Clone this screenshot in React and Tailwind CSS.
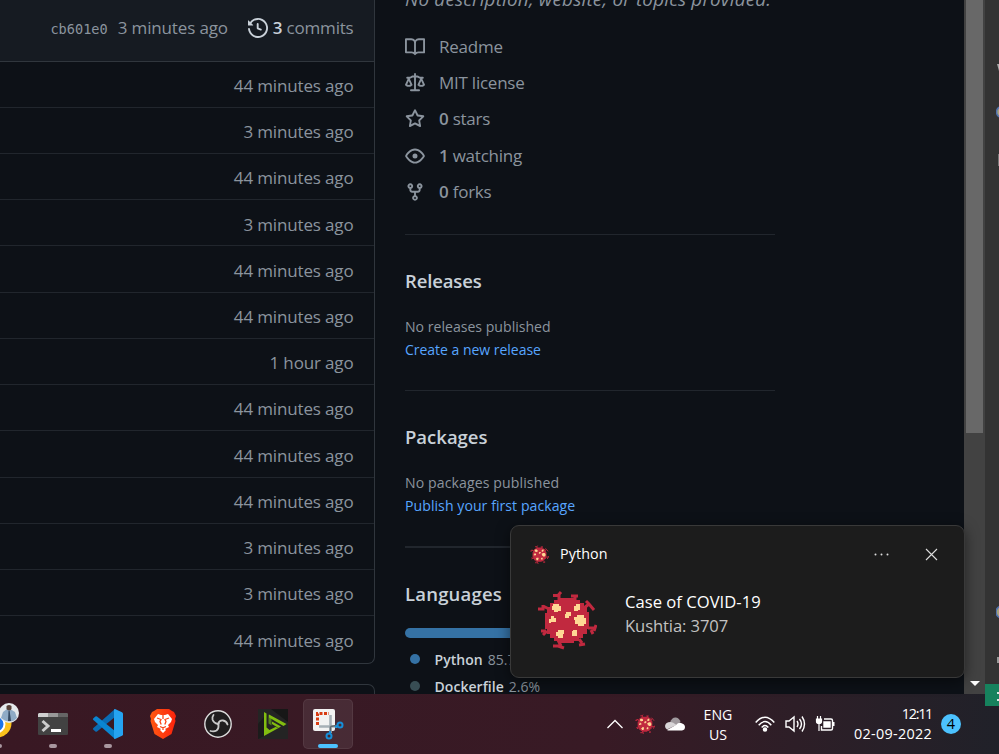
import React from "react";

const octicons = {
  history: "M1.643 3.143L.427 1.927A.25.25 0 000 2.104V5.75c0 .138.112.25.25.25h3.646a.25.25 0 00.177-.427L2.715 4.215a6.5 6.5 0 11-1.18 4.458.75.75 0 10-1.493.154 8.001 8.001 0 101.6-5.684zM7.75 4a.75.75 0 01.75.75v2.992l2.028.812a.75.75 0 01-.557 1.392l-2.5-1A.75.75 0 017 8.25v-3.5A.75.75 0 017.75 4z",
  book: "M0 1.75A.75.75 0 01.75 1h4.253c1.227 0 2.317.59 3 1.501A3.744 3.744 0 0111.006 1h4.245a.75.75 0 01.75.75v10.5a.75.75 0 01-.75.75h-4.507a2.25 2.25 0 00-1.591.659l-.622.621a.75.75 0 01-1.06 0l-.622-.621A2.25 2.25 0 005.258 13H.75a.75.75 0 01-.75-.75V1.75zm8.755 3a2.25 2.25 0 012.25-2.25H14.5v9h-3.757c-.71 0-1.4.201-1.992.572l.004-7.322zm-1.504 7.324l.004-5.073-.002-2.253A2.25 2.25 0 005.003 2.5H1.5v9h3.757a3.75 3.75 0 011.994.574z",
  law: "M8.75.75a.75.75 0 00-1.5 0V2h-.984c-.305 0-.604.08-.869.23l-1.288.737A.25.25 0 013.984 3H1.75a.75.75 0 000 1.5h.428L.066 9.192a.75.75 0 00.154.838l.07.065a3.514 3.514 0 00.686.45A4.492 4.492 0 003 11c.88 0 1.556-.22 2.023-.454a3.515 3.515 0 00.686-.45l.071-.066a.75.75 0 00.154-.838L3.822 4.5h.162c.305 0 .604-.08.869-.23l1.289-.737a.25.25 0 01.124-.033h.984V13h-2.5a.75.75 0 000 1.5h6.5a.75.75 0 000-1.5h-2.5V3.5h.984a.25.25 0 01.124.033l1.29.736c.264.152.563.231.868.231h.162l-2.112 4.692a.75.75 0 00.154.838l.07.065a3.517 3.517 0 00.686.45A4.492 4.492 0 0013 11c.88 0 1.556-.22 2.023-.454a3.512 3.512 0 00.686-.45l.071-.066a.75.75 0 00.154-.838L13.823 4.5h.427a.75.75 0 000-1.5h-2.234a.25.25 0 01-.124-.033l-1.29-.736A1.75 1.75 0 009.735 2H8.75V.75zM1.695 9.227c.285.135.718.273 1.305.273s1.02-.138 1.305-.273L3 6.327l-1.305 2.9zm10 0c.285.135.718.273 1.305.273s1.02-.138 1.305-.273L13 6.327l-1.305 2.9z",
  star: "M8 .25a.75.75 0 01.673.418l1.882 3.815 4.21.612a.75.75 0 01.416 1.279l-3.046 2.97.719 4.192a.75.75 0 01-1.088.791L8 12.347l-3.766 1.98a.75.75 0 01-1.088-.79l.72-4.194L.818 6.374a.75.75 0 01.416-1.28l4.21-.611L7.327.668A.75.75 0 018 .25zm0 2.445L6.615 5.5a.75.75 0 01-.564.41l-3.097.45 2.24 2.184a.75.75 0 01.216.664l-.528 3.084 2.769-1.456a.75.75 0 01.698 0l2.77 1.456-.53-3.084a.75.75 0 01.216-.664l2.24-2.183-3.096-.45a.75.75 0 01-.564-.41L8 2.694v.001z",
  eye: "M1.679 7.932c.412-.621 1.242-1.75 2.366-2.717C5.175 4.242 6.527 3.5 8 3.5c1.473 0 2.824.742 3.955 1.715 1.124.967 1.954 2.096 2.366 2.717a.119.119 0 010 .136c-.412.621-1.242 1.75-2.366 2.717C10.825 11.758 9.473 12.5 8 12.5c-1.473 0-2.824-.742-3.955-1.715C2.92 9.818 2.09 8.69 1.679 8.068a.119.119 0 010-.136zM8 2c-1.981 0-3.67.992-4.933 2.078C1.797 5.169.88 6.423.43 7.1a1.619 1.619 0 000 1.798c.45.678 1.367 1.932 2.637 3.024C4.329 13.008 6.019 14 8 14c1.981 0 3.67-.992 4.933-2.078 1.27-1.091 2.187-2.345 2.637-3.023a1.619 1.619 0 000-1.798c-.45-.678-1.367-1.932-2.637-3.023C11.671 2.992 9.981 2 8 2zm0 8a2 2 0 100-4 2 2 0 000 4z",
  fork: "M5 3.25a.75.75 0 11-1.5 0 .75.75 0 011.5 0zm0 2.122a2.25 2.25 0 10-1.5 0v.878A2.25 2.25 0 005.75 8.5h1.5v2.128a2.251 2.251 0 101.5 0V8.5h1.5a2.25 2.25 0 002.25-2.25v-.878a2.25 2.25 0 10-1.5 0v.878a.75.75 0 01-.75.75h-4.5A.75.75 0 015 6.25v-.878zm3.75 7.378a.75.75 0 11-1.5 0 .75.75 0 011.5 0zm3-8.75a.75.75 0 100-1.5.75.75 0 000 1.5z",
};

const times = [
  "44 minutes ago", "3 minutes ago", "44 minutes ago", "3 minutes ago", "44 minutes ago",
  "44 minutes ago", "1 hour ago", "44 minutes ago", "44 minutes ago", "44 minutes ago",
  "3 minutes ago", "3 minutes ago", "44 minutes ago",
];

function Octicon({ name, className }) {
  return (
    <svg className={className} viewBox="0 0 16 16" fill="currentColor">
      <path fillRule="evenodd" d={octicons[name]} />
    </svg>
  );
}

function Virus({ className }) {
  return (
    <svg className={className} viewBox="0 0 60 60">
      <g stroke="#c1293f" strokeWidth="3" fill="none">
        <path d="M22 11V4M16 5.500h5l3-3.500M38 10V6M34 6h7M47 18l5-4M49 11l3 3 5 6M12 19l-6-3M1 19h5v-4M9 41H4M10 41l-4 4M21 50l3 6M16 56h5l6 2M42 49l3 4M42 55l6-1M51 38h6M59 35l-2 6M54 40l2 4" />
      </g>
      <path fill="#c1293f" d="M22 8h16v2h5v3h4v4h3v5h2v17h-2v5h-4v4h-4v3h-5v2H22v-2h-5v-3h-4v-4h-3v-5H8V23h2v-6h3v-4h4v-3h5z" />
      <path fill="#ffd894" d="M16 14h6v2h2v5h-3v1h-4v-2h-2v-4h1zM39 14h4v6h-2v1h-4v-5h2zM29 22h5v4h-2v2h-4v-4h1zM14 26h3v2h2v4h-5v1h-2v-4h2zM40 25h7v3h2v6h-2v2h-6v-2h-3v-4h-1v-3h3zM21 40h6v4h-1v4h-5v-2h-2v-4h2zM36 40h4v6h-5v-5h1z" />
    </svg>
  );
}

function Info({ icon, num, children }) {
  return (
    <div className="flex h-[36.2px] items-center text-[#8b949e]">
      <Octicon name={icon} className="h-5 w-5 shrink-0" />
      <span className="ml-[14px] whitespace-pre text-[17px] leading-6 tracking-[-0.24px]">
        {num && <b className="font-semibold">{num} </b>}
        {children}
      </span>
    </div>
  );
}

function FileTable() {
  return (
    <div className="flex h-full w-[375px] shrink-0 flex-col">
      <div className="h-[664px] shrink-0 overflow-hidden rounded-br-[7px] border-r border-b border-[#30363d]">
        <div className="flex h-[61.6px] items-center justify-end border-b border-[#30363d] bg-[#161b22] pr-[20.5px] pb-[5px] text-[17px] text-[#8b949e]">
          <span className="mt-[3px] font-['DejaVu_Sans_Mono'] text-[13.6px]">cb601e0</span>
          <span className="ml-[10px] tracking-[-0.15px]">3 minutes ago</span>
          <Octicon name="history" className="ml-5 h-5 w-5 text-[#c9d1d9]" />
          <span className="ml-[5px] tracking-[-0.2px]"><b className="font-semibold text-[#c9d1d9]">3</b> commits</span>
        </div>
        {times.map((t, i) => (
          <div key={i} className="flex h-[46.23px] items-center justify-end border-b border-[#21262d] pt-[3px] pr-[20.5px] text-[17px] tracking-[-0.15px] text-[#8b949e] last:border-transparent">{t}</div>
        ))}
      </div>
      <div className="mt-5 h-5 rounded-tr-[7px] border-t border-r border-[#30363d]" />
    </div>
  );
}

function Sidebar() {
  return (
    <div className="ml-[30px] flex w-[370px] shrink-0 flex-col">
      <div className="-mt-[13px] h-6 shrink-0 text-[18.8px] leading-6 tracking-[0.22px] whitespace-nowrap text-[#8b949e] italic">No description, website, or topics provided.</div>
      <div className="mt-[18px] flex shrink-0 flex-col">
        <Info icon="book">Readme</Info>
        <Info icon="law">MIT license</Info>
        <Info icon="star" num="0">stars</Info>
        <Info icon="eye" num="1">watching</Info>
        <Info icon="fork" num="0">forks</Info>
      </div>
      <section className="mt-[24px] h-[156px] shrink-0 border-t border-[#21262d] pt-[33px]">
        <h2 className="text-[18.5px] leading-[25px] font-semibold tracking-[-0.15px] text-[#c9d1d9]">Releases</h2>
        <p className="mt-[22px] text-[14.1px] leading-[23px] text-[#8b949e]">No releases published</p>
        <p className="text-[14px] leading-[23px] tracking-[-0.02px] text-[#58a6ff]">Create a new release</p>
      </section>
      <section className="h-[156px] shrink-0 border-t border-[#21262d] pt-[33px]">
        <h2 className="text-[18.5px] leading-[25px] font-semibold text-[#c9d1d9]">Packages</h2>
        <p className="mt-[22px] text-[14.1px] leading-[23px] tracking-[0.1px] text-[#8b949e]">No packages published</p>
        <p className="text-[14.1px] leading-[23px] tracking-[0.05px] text-[#58a6ff]">Publish your first package</p>
      </section>
      <section className="shrink-0 border-t-2 border-[#21262d] pt-[33px]">
        <h2 className="text-[18.5px] leading-[25px] font-semibold tracking-[0.2px] text-[#c9d1d9]">Languages</h2>
        <div className="mt-[22px] h-[10px] rounded-full bg-[#3572a5]" />
        <div className="mt-[8px] flex h-[27px] items-center text-[14px] text-[#8b949e]">
          <i className="mr-[14.5px] ml-[5px] h-[10px] w-[10px] rounded-full bg-[#3572a5]" />
          <b className="mr-[5px] font-semibold tracking-[0.05px] text-[#c9d1d9]">Python</b> 85.7%
        </div>
        <div className="flex h-[27px] items-center text-[14px] text-[#8b949e]">
          <i className="mr-[14.5px] ml-[5px] h-[10px] w-[10px] rounded-full bg-[#384d54]" />
          <b className="mr-[5px] font-semibold tracking-[0.05px] text-[#c9d1d9]">Dockerfile</b> 2.6%
        </div>
      </section>
    </div>
  );
}

function Toast() {
  return (
    <div className="absolute top-[525px] left-[510px] h-[153px] w-[455px] rounded-[9px] border border-[#393939] bg-[#1c1c1c] shadow-[0_3px_14px_rgba(0,0,0,.5)]">
      <div className="flex h-[56px] items-center pl-[19px]">
        <Virus className="h-[19px] w-[19px]" />
        <span className="ml-[11px] text-[14.3px] leading-5 tracking-[0.12px] text-white">Python</span>
        <svg className="ml-auto h-4 w-4" viewBox="0 0 16 16" fill="#ddd"><circle cx="2.5" cy="8.500" r="1" /><circle cx="8.500" cy="8.500" r="1" /><circle cx="14.500" cy="8.500" r="1" /></svg>
        <svg className="mr-[26px] ml-[36px] h-[13px] w-[13px]" viewBox="0 0 13 13" stroke="#ddd" strokeWidth="1.1"><path d="M1 1l11 11M12 1 1 12" /></svg>
      </div>
      <div className="flex pl-[26px]">
        <Virus className="mt-[8px] h-[60px] w-[60px]" />
        <div className="ml-[28px] pt-[8px] text-[16.6px] leading-6">
          <p className="tracking-[0.02px] text-white">Case of COVID-19</p>
          <p className="tracking-[-0.1px] text-[#c2c2c2]">Kushtia: 3707</p>
        </div>
      </div>
    </div>
  );
}

function Chrome() {
  return (
    <svg className="h-[60px] w-[20px]" viewBox="0 0 20 60">
      <circle cx="-3" cy="29" r="14.500" fill="#fbc11c" />
      <circle cx="-4" cy="30" r="9.500" fill="#fff" />
      <circle cx="-4" cy="30" r="7.500" fill="#1a73e8" />
      <circle cx="9" cy="19" r="10" fill="#e5e9ec" />
      <path d="M1 24l2-6 4-3 3 0 5 3 2 6q-7 7-16 0z" fill="#8fabc6" />
      <path d="M8.500 17h1.200l1.300 10H8z" fill="#344a63" />
      <path d="M6.500 12q2.500-2 5 0v3q-2 3-5 0z" fill="#574138" />
    </svg>
  );
}

function Terminal() {
  return (
    <svg className="h-[22px] w-[30px]" viewBox="0 0 30 22">
      <rect width="30" height="22" rx="1.2" fill="#424242" />
      <path d="M1 0h9v4H0V1z" fill="#d0d0d0" /><path d="M10 0h10v4H10z" fill="#999" /><path d="M20 0h9l1 1v3H20z" fill="#666" />
      <path d="M4.500 8l5.500 5-5.500 5" fill="none" stroke="#ccc" strokeWidth="3" /><path d="M13 16h10v3H13z" fill="#fff" />
    </svg>
  );
}

function VSCode() {
  return (
    <svg className="h-[30px] w-[30px]" viewBox="0 0 30 30">
      <path d="M22 0v8L4 22.5q-.8.6-1.6 0L.4 20.7q-.8-.8 0-1.7z" fill="#0a6cb4" />
      <path d="M22 30v-8L4 7.5q-.8-.6-1.6 0L.4 9.300q-.8.8 0 1.700z" fill="#0a85d1" />
      <path d="M22 0l7 3.200q1 .5 1 1.500v20.600q0 1-1 1.500L22 30q-1 0-1-1V1q0-1 1-1z" fill="#25a4f2" />
    </svg>
  );
}

function Brave() {
  return (
    <svg className="h-[30px] w-[26px]" viewBox="0 0 26 30">
      <defs><linearGradient id="brave"><stop stopColor="#ff5a13" /><stop offset="1" stopColor="#fb220c" /></linearGradient></defs>
      <path d="M7 0h12l3 2 2 1 2 4-1 3 .5 2-4 13-8.500 5-8.500-5L.5 12l.5-2-1-3 2-4 2-1z" fill="url(#brave)" />
      <path d="M8 5l3 1h4l3-1 4 5-1 3-3 3 1 2-4 2 1 1-3 3-3-3 1-1-4-2 1-2-3-3-1-3z" fill="#fff" />
      <path d="M7 9l4 1.500-1 2 1.200 3M19 9l-4 1.500 1 2-1.200 3M13 6v4M10 17.500l3 1.300 3-1.300M13 18.500V21" fill="none" stroke="#fb4518" strokeWidth="1.300" />
    </svg>
  );
}

function OBS() {
  return (
    <svg className="h-[28px] w-[28px]" viewBox="0 0 28 28">
      <circle cx="14" cy="14" r="13.200" fill="#1f1d1e" stroke="#dcdcdc" strokeWidth="1.400" />
      <g fill="none" stroke="#c9c9c9" strokeWidth="1.800" strokeLinecap="round">
        <path d="M14 14Q9.500 13 8.500 9.500 8 7 9.500 5" />
        <path d="M14 14Q15.500 10 19 10.500q3.500.5 4.500 4" />
        <path d="M14 14q1.500 4-1.500 6.500Q10 22 6.500 21" />
      </g>
      <path d="M12.500 13h3.200l-.7 3.500z" fill="#c9c9c9" />
    </svg>
  );
}

function Player() {
  return (
    <svg className="h-[30px] w-[30px]" viewBox="0 0 30 30">
      <path fill="#242424" d="M0 0h30v30H0z" /><path d="M13 0h17v13z" fill="#171717" /><path d="M0 15L6 8v19L0 30z" fill="#1b1b1b" />
      <path d="M6 3l2.500 1.500v14l3 2.500 6-3 3 1L6 27z" fill="#82bd10" />
      <path d="M10.500 5.500l3 2v9l-3-2z" fill="#55821b" />
      <path d="M11 5.500L28.500 15l-3 2L11 8.500zM14 12.500l9 5-2.500 1.500-6.500-4z" fill="#82bd10" />
    </svg>
  );
}

function Snip() {
  return (
    <svg className="h-[31px] w-[31px]" viewBox="0 0 31 31">
      <rect width="22" height="22" rx="2" fill="#f2f2f2" />
      <path d="M4.5 16V4.500H16" fill="none" stroke="#d83b12" strokeWidth="3" strokeDasharray="3 1.500" />
      <path d="M17.500 6v18M6 17.500h18" stroke="#a6b0b6" strokeWidth="2.600" />
      <path d="M17.500 17.500l6-1M17.500 17.500v5" stroke="#5d6970" strokeWidth="1.600" />
      <g fill="none" stroke="#168fd9" strokeWidth="2"><circle cx="27" cy="16" r="2.500" /><circle cx="16" cy="27" r="2.500" /><path d="M22 18l3-1M17 24v-2" /></g>
    </svg>
  );
}

function Task({ children, dot, active }) {
  return (
    <div className={"relative flex h-[50px] w-[50px] shrink-0 items-center justify-center rounded-[5px] " + (active ? "border border-white/7 bg-white/8" : "")}>
      {children}
      {dot && <i className="absolute bottom-[1px] left-[21px] h-1 w-2 rounded-full bg-[#a9979f]" />}
      {active && <i className="absolute bottom-0 left-[14px] h-1 w-5 rounded-full bg-[#4cc2ff]" />}
    </div>
  );
}

function Taskbar() {
  return (
    <div className="flex h-[60px] w-full items-center overflow-hidden bg-linear-to-r from-[#391823] via-[#381a25] via-60% to-[#202129] text-white">
      <div className="relative flex h-[60px] w-[28px] shrink-0">
        <Chrome />
        <i className="absolute top-[50px] -left-[6px] h-1 w-2 rounded-full bg-[#a9979f]" />
      </div>
      <div className="flex gap-[5px]">
        <Task dot><Terminal /></Task>
        <Task dot><VSCode /></Task>
        <Task><Brave /></Task>
        <Task><OBS /></Task>
        <Task><Player /></Task>
        <Task active><Snip /></Task>
      </div>
      <svg className="ml-[254px] h-[10px] w-4 shrink-0" viewBox="0 0 16 10" fill="none" stroke="white" strokeWidth="1.300"><path d="M.5 9L8 1.500 15.500 9" /></svg>
      <Virus className="mb-px ml-[12px] h-[20px] w-[20px] shrink-0" />
      <svg className="ml-[10px] h-[14px] w-[20px] shrink-0" viewBox="0 0 20 14">
        <path d="M5 5.500Q7 0 11 .5q3.500.5 4.500 4.500L10 9z" fill="#a09a9e" />
        <path d="M2 12.500Q0 11 0 9q.5-4 5.500-4 2.500 0 6 3z" fill="#d8d5d7" />
        <path d="M2 13l9-5q2.500-3 5-2 4 1 4 4 0 3-3 3.500H4q-1 0-2-.5z" fill="#fff" />
      </svg>
      <div className="ml-[18px] w-[30px] shrink-0 pt-px text-center text-[14.2px] leading-5"><div>ENG</div><div>US</div></div>
      <svg className="ml-[22px] h-[16px] w-[20px] shrink-0" viewBox="0 0 20 16" fill="none" stroke="white" strokeWidth="1.500"><path d="M.7 6.500Q10-4 19.300 6.500M3.700 9.200Q10 2 16.300 9.200M6.700 11.500Q10 7.500 13.300 11.500" /><circle cx="10" cy="13.500" r="1.500" fill="white" /></svg>
      <svg className="ml-[10px] h-[18px] w-[21px] shrink-0" viewBox="0 0 21 18" fill="none" stroke="white" strokeWidth="1.400"><path d="M1 6h3l5-4v14l-5-4H1zM12 6q2 3 0 6M14.500 4q4 5 0 10M17 1.500q5 7.500 0 15" /></svg>
      <svg className="ml-[9px] h-[18px] w-[20px] shrink-0" viewBox="0 0 20 18" fill="none" stroke="white" strokeWidth="1.400"><path d="M9 4h7q1.500 0 1.500 1.500v8q0 1.500-1.500 1.500H6.500v-4" /><path d="M9 7h6v5H9z" fill="white" /><path d="M18 7h1.500v4H18z" fill="white" stroke="none" /><path d="M1.500 4h5v2.500q0 2-2.500 2t-2.500-2zM2.500 1v3M5.500 1v3M4 9v7" fill="white" strokeWidth="1.200" /></svg>
      <div className="ml-[17px] w-[80px] shrink-0 text-right text-[14.4px] leading-5 whitespace-nowrap">
        <div className="tracking-[-1.300px]">12:11</div>
        <div className="tracking-[0.3px]">02-09-2022</div>
      </div>
      <div className="ml-[9px] flex h-5 w-5 shrink-0 items-center justify-center rounded-full bg-[#4cc2ff] text-[14.5px] text-black">4</div>
    </div>
  );
}

function BackgroundWindow() {
  return (
    <div className="flex w-[14px] shrink-0 flex-col items-end overflow-hidden bg-[#333333]">
      <svg className="h-[694px] w-[3px] shrink-0" viewBox="0 0 3 694">
        <path d="M1 64h2v7z" fill="#aaa" />
        <circle cx="6" cy="112" r="5.500" fill="#a5a27e" stroke="#5273b1" strokeWidth="1.500" />
        <path d="M2 154h1v12H2z" fill="#777" />
        <circle cx="6" cy="612" r="6" fill="#a5a27e" stroke="#5273b1" strokeWidth="1.500" />
        <path d="M1 657h2v6H1z" fill="#999" />
      </svg>
    </div>
  );
}

export default function App() {
  return (
    <div className="relative flex h-[754px] w-[999px] flex-col overflow-hidden bg-[#0d1117] font-['Open_Sans','Noto_Sans',sans-serif]">
      <div className="flex h-[694px] shrink-0 overflow-hidden">
        <FileTable />
        <Sidebar />
        <div className="ml-auto flex w-[21px] shrink-0 flex-col items-center bg-[#424242]">
          <div className="h-[433px] w-[17px] bg-[#686868]" />
          <svg className="mt-auto mb-[8px] h-[5px] w-[10px]" viewBox="0 0 10 5"><path fill="#fff" d="M0 0h10L5 5z" /></svg>
        </div>
        <BackgroundWindow />
      </div>
      <Taskbar />
      <div className="absolute top-[684px] right-0 h-[22px] w-[14px] overflow-hidden bg-[#16825d]">
        <svg className="ml-[12px] h-[22px] w-[2px]" viewBox="0 0 2 22" fill="#d7e9e4"><path d="M0 8h2v2H0zM0 15h2v2H0z" /></svg>
      </div>
      <Toast />
    </div>
  );
}
